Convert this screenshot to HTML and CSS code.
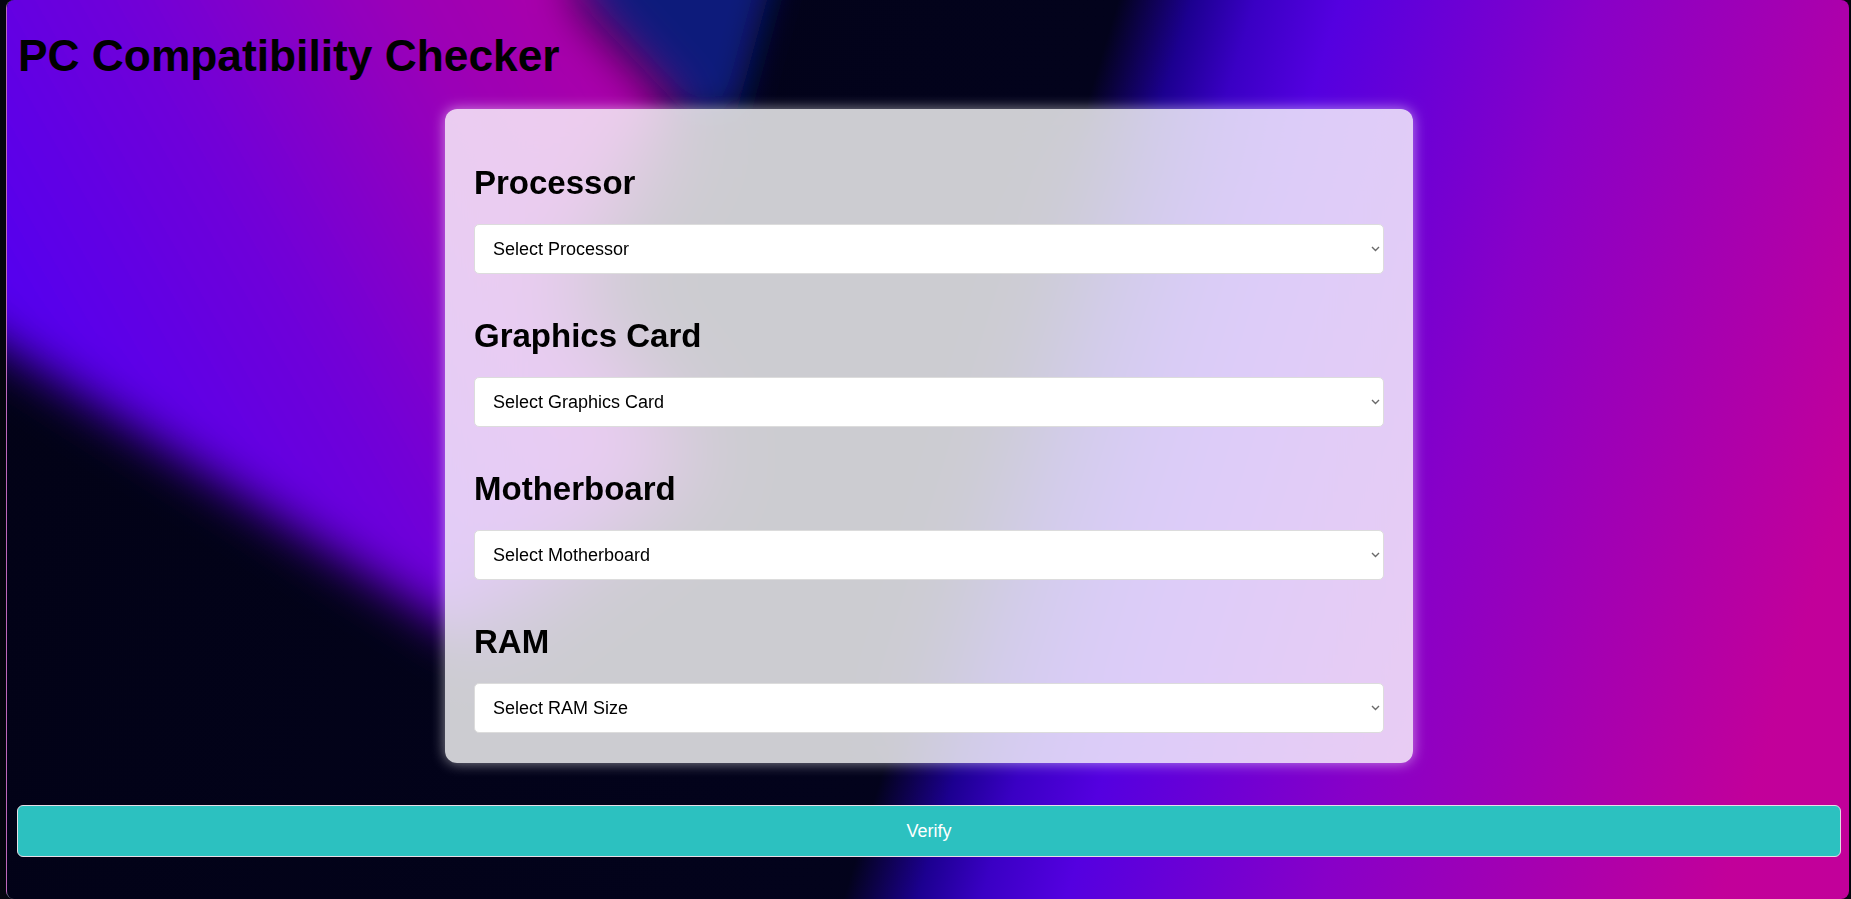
FILE: index.html
```html
<!DOCTYPE html>
<html lang="en">
<head>
<meta charset="utf-8">
<title>PC Compatibility Checker</title>
<link rel="stylesheet" href="styles.css">
</head>
<body>
<div class="page">
  <svg class="backdrop" viewBox="0 0 1842 899" preserveAspectRatio="none" aria-hidden="true">
    <defs>
      <linearGradient id="wedge" gradientUnits="userSpaceOnUse" x1="0" y1="340" x2="600" y2="0">
        <stop offset="0" stop-color="#5200f0"/>
        <stop offset="0.4" stop-color="#7000d8"/>
        <stop offset="0.75" stop-color="#9c00b6"/>
        <stop offset="1" stop-color="#ae00a6"/>
      </linearGradient>
      <filter id="soft" filterUnits="userSpaceOnUse" x="-300" y="-300" width="2500" height="1500">
        <feGaussianBlur stdDeviation="24"/>
      </filter>
      <filter id="streak" filterUnits="userSpaceOnUse" x="-300" y="-300" width="2500" height="1500">
        <feGaussianBlur stdDeviation="16"/>
      </filter>
    </defs>
    <g filter="url(#streak)">
      <polygon fill="#0e1c8c" opacity="0.85" points="560,-100 790,-100 760,0 730,110 680,115 570,0"/>
    </g>
    <g filter="url(#soft)">
      <polygon fill="url(#wedge)" points="-200,-200 590,-200 572,0 672,108 560,290 693,460 463,640 -7,345 -200,220"/>
    </g>
  </svg>

  <h1 class="title">PC Compatibility Checker</h1>

  <form class="card">
    <div class="field">
      <label class="label" for="cpu">Processor</label>
      <div class="select-wrap">
        <select class="picker" id="cpu"><option>Select Processor</option></select>
        <svg class="chevron" viewBox="0 0 9 6" aria-hidden="true"><path d="M1 1l3.5 3.5L8 1"/></svg>
      </div>
    </div>
    <div class="field">
      <label class="label" for="gpu">Graphics Card</label>
      <div class="select-wrap">
        <select class="picker" id="gpu"><option>Select Graphics Card</option></select>
        <svg class="chevron" viewBox="0 0 9 6" aria-hidden="true"><path d="M1 1l3.5 3.5L8 1"/></svg>
      </div>
    </div>
    <div class="field">
      <label class="label" for="mobo">Motherboard</label>
      <div class="select-wrap">
        <select class="picker" id="mobo"><option>Select Motherboard</option></select>
        <svg class="chevron" viewBox="0 0 9 6" aria-hidden="true"><path d="M1 1l3.5 3.5L8 1"/></svg>
      </div>
    </div>
    <div class="field">
      <label class="label" for="ram">RAM</label>
      <div class="select-wrap">
        <select class="picker" id="ram"><option>Select RAM Size</option></select>
        <svg class="chevron" viewBox="0 0 9 6" aria-hidden="true"><path d="M1 1l3.5 3.5L8 1"/></svg>
      </div>
    </div>
  </form>

  <button class="verify" type="button">Verify</button>
</div>
</body>
</html>
```

FILE: styles.css
```css
* {
  box-sizing: border-box;
}

html,
body {
  margin: 0;
  height: 100%;
  background: #05050f;
}

body {
  padding: 0 2px 0 6px;
  font-family: "Liberation Sans", Arial, sans-serif;
}

.page {
  position: relative;
  isolation: isolate;
  height: 899px;
  overflow: hidden;
  display: flex;
  flex-direction: column;
  padding: 30px 8px 0 10px;
  border-left: 1px solid rgba(190, 190, 215, 0.55);
  border-radius: 8px;
  background: linear-gradient(107deg, #020216 0%, #03031c 52.5%, #1c0090 56%, #3a00c4 59%, #5400e0 63%, #8800c8 75%, #c2009a 94%);
}

.backdrop {
  position: absolute;
  inset: 0;
  width: 100%;
  height: 100%;
  z-index: -1;
}

.title {
  margin: 0 0 28px 1px;
  font-size: 44.3px;
  line-height: 51px;
  font-weight: 700;
  color: #000;
}

.card {
  align-self: center;
  display: flex;
  flex-direction: column;
  gap: 16px;
  width: 968px;
  padding: 28px 29px 30px;
  border-radius: 12px;
  background: rgba(255, 255, 255, 0.8);
  backdrop-filter: blur(40px);
  box-shadow: 0 0 14px rgba(255, 255, 255, 0.55);
}

.label {
  display: block;
  margin: 27px 0 22px;
  font-size: 33px;
  line-height: 38px;
  font-weight: 700;
  color: #000;
}

.select-wrap {
  position: relative;
}

.picker {
  display: block;
  width: 100%;
  height: 50px;
  padding: 0 20px 0 18px;
  font-family: "Liberation Sans", Arial, sans-serif;
  font-size: 18px;
  color: #000;
  background: #fff;
  border: 1px solid #dcdcdc;
  border-radius: 5px;
  appearance: none;
  -webkit-appearance: none;
}

.chevron {
  position: absolute;
  right: 4px;
  top: 22px;
  width: 9px;
  height: 6px;
  fill: none;
  stroke: #6a6a6a;
  stroke-width: 1.4;
  pointer-events: none;
}

.verify {
  margin-top: 42px;
  width: 100%;
  height: 52px;
  font-family: "Liberation Sans", Arial, sans-serif;
  font-size: 18px;
  color: #fff;
  background: #2cc1c0;
  border: 1px solid #e6dde6;
  border-radius: 6px;
}
```
